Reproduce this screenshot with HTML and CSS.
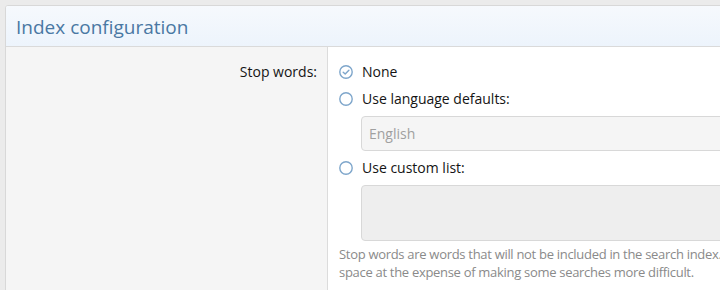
FILE: index.html
```html
<!DOCTYPE html>
<html lang="en">
<head>
  <meta charset="UTF-8">
  <title>Index configuration</title>
  <link rel="stylesheet" href="styles.css">
</head>
<body>

  <div class="block">
    <h2 class="block-header">Index configuration</h2>

    <div class="form-row">
      <div class="form-label">Stop words:</div>

      <div class="form-input">
        <label class="choice">
          <span class="radio checked">
            <svg viewBox="0 0 14 14" width="14" height="14">
              <circle cx="7" cy="7" r="6.2" fill="none" stroke="#7ea6cb" stroke-width="1.4"/>
              <path d="M4.2 7.2 L6.2 9.1 L9.9 5.2" fill="none" stroke="#7ea6cb" stroke-width="1.4" stroke-linecap="round" stroke-linejoin="round"/>
            </svg>
          </span>
          None
        </label>

        <label class="choice">
          <span class="radio">
            <svg viewBox="0 0 14 14" width="14" height="14">
              <circle cx="7" cy="7" r="6.2" fill="none" stroke="#7ea6cb" stroke-width="1.4"/>
            </svg>
          </span>
          Use language defaults:
        </label>
        <div class="dependent">
          <div class="select disabled">English</div>
        </div>

        <label class="choice">
          <span class="radio">
            <svg viewBox="0 0 14 14" width="14" height="14">
              <circle cx="7" cy="7" r="6.2" fill="none" stroke="#7ea6cb" stroke-width="1.4"/>
            </svg>
          </span>
          Use custom list:
        </label>
        <div class="dependent last">
          <div class="textarea disabled"></div>
        </div>

        <p class="explain">Stop words are words that will not be included in the search index.<br>
          space at the expense of making some searches more difficult.</p>
      </div>
    </div>
  </div>

</body>
</html>
```

FILE: styles.css
```css
/* General Styles */
html {
  overflow: hidden;
}

body {
  font-family: 'Open Sans', sans-serif;
  margin: 0;
  padding: 5px 0 0 5px;
  background-color: #ebebeb;
  color: #141414;
  overflow: hidden;
}

.block {
  height: 320px;
  margin-right: -10px;
  background-color: white;
  border: 1px solid #d8d8d8;
  border-radius: 3px;
  overflow: hidden;
}

.block-header {
  margin: 0;
  height: 41px;
  padding: 1px 10px 0;
  box-sizing: border-box;
  line-height: 40px;
  font-size: 19px;
  font-weight: normal;
  color: #4a78a3;
  background: linear-gradient(to bottom, #f6f9fd, #edf4fc);
  border-bottom: 1px solid #dadada;
}

.form-row {
  display: grid;
  grid-template-columns: 322px 1fr;
  height: 100%;
}

.form-label {
  background-color: #f5f5f5;
  border-right: 1px solid #dcdcdc;
  text-align: right;
  padding: 15px 10px 0 0;
  font-size: 14px;
  line-height: 20px;
}

.form-input {
  padding: 15px 0 0 11px;
  font-size: 14px;
  line-height: 20px;
  overflow: hidden;
}

.choice {
  display: flex;
  align-items: center;
  gap: 9px;
  height: 20px;
  margin-bottom: 7px;
}

.radio {
  display: flex;
  width: 14px;
  height: 14px;
}

.dependent {
  padding: 0 0 7px 22px;
}

.dependent.last {
  padding-bottom: 4px;
}

.select,
.textarea {
  box-sizing: border-box;
  width: 420px;
  border: 1px solid #d8d8d8;
  border-radius: 4px;
  color: #a0a0a0;
  padding: 0 7px;
}

.select {
  height: 35px;
  line-height: 33px;
  background-color: #f5f5f5;
}

.textarea {
  height: 56px;
  background-color: #eeeeee;
}

.explain {
  margin: 0;
  font-size: 13px;
  line-height: 18px;
  letter-spacing: -0.3px;
  color: #8a8a8a;
  white-space: nowrap;
}
```
